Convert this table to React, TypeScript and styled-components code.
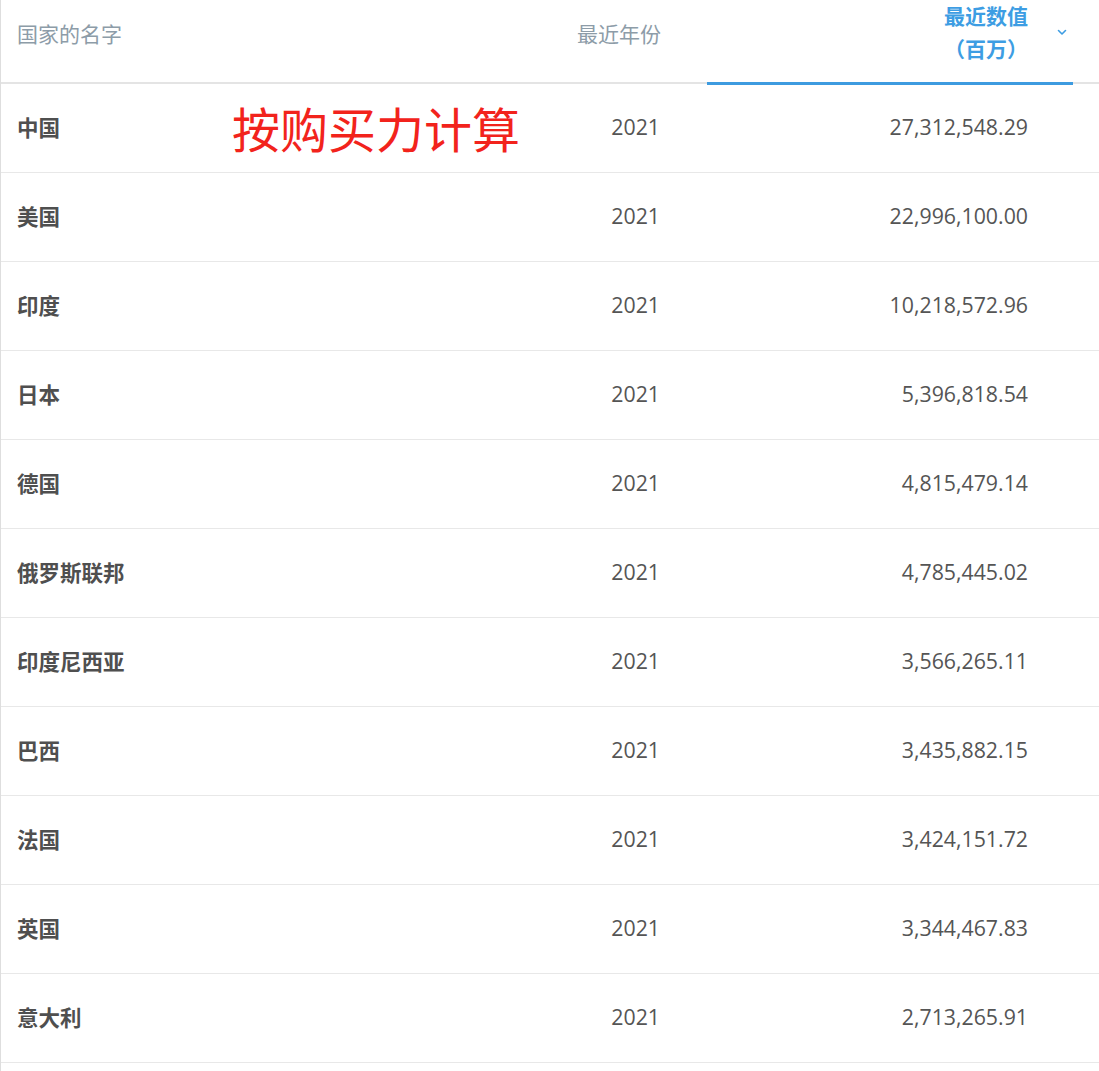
import React from 'react'
import styled, { createGlobalStyle } from 'styled-components'

const GlobalStyle = createGlobalStyle`
  html, body {
    margin: 0;
    padding: 0;
    background: #ffffff;
  }
  body {
    font-family: 'Open Sans', 'Noto Sans CJK SC', sans-serif;
  }
`

const COLUMNS = '479px 227px 366px 26px'

const Table = styled.div`
  width: 1099px;
  box-sizing: border-box;
  border-left: 1px solid #dedede;
  min-height: 1071px;
`

const HeaderRow = styled.div`
  display: grid;
  grid-template-columns: ${COLUMNS};
  height: 84px;
  box-sizing: border-box;
  border-bottom: 2px solid #e4e4e4;
`

const HeaderCell = styled.div<{ align?: 'left' | 'right' }>`
  display: flex;
  align-items: center;
  justify-content: ${({ align }) => (align === 'right' ? 'flex-end' : 'flex-start')};
  padding: ${({ align }) => (align === 'right' ? '0 46px 18px 0' : '0 0 18px 16px')};
  font-size: 21px;
  color: #8d9ca8;
`

const ActiveHeaderCell = styled.div`
  position: relative;
  display: flex;
  align-items: center;
  justify-content: flex-end;
  gap: 28px;
  padding: 0 5px 18px 0;

  &::after {
    content: '';
    position: absolute;
    left: 0;
    right: 0;
    bottom: -1px;
    height: 3px;
    background: #3d9be0;
  }
`

const ActiveLabel = styled.div`
  text-align: right;
  font-size: 21px;
  font-weight: 700;
  line-height: 33px;
  color: #3d9de3;
`

const Chevron = styled.svg`
  width: 12px;
  height: 12px;
  margin-bottom: 2px;
`

const Row = styled.div`
  position: relative;
  display: grid;
  grid-template-columns: ${COLUMNS};
  height: 89px;
  box-sizing: border-box;
  border-bottom: 1px solid #e8e8e8;
`

const NameCell = styled.div`
  display: flex;
  align-items: center;
  padding: 0 0 3px 16px;
  font-size: 21.5px;
  font-weight: 700;
  color: #4f4f4f;
`

const NumCell = styled.div<{ pad: number }>`
  display: flex;
  align-items: center;
  justify-content: flex-end;
  padding: 0 ${({ pad }) => pad}px 3px 0;
  font-size: 21.3px;
  color: #555555;
`

const Note = styled.div`
  position: absolute;
  left: 231px;
  top: 50%;
  transform: translateY(-52%);
  font-family: 'Noto Sans CJK SC', sans-serif;
  font-size: 48px;
  color: #f2231c;
`

const rows = [
  { name: '中国', year: 2021, value: '27,312,548.29' },
  { name: '美国', year: 2021, value: '22,996,100.00' },
  { name: '印度', year: 2021, value: '10,218,572.96' },
  { name: '日本', year: 2021, value: '5,396,818.54' },
  { name: '德国', year: 2021, value: '4,815,479.14' },
  { name: '俄罗斯联邦', year: 2021, value: '4,785,445.02' },
  { name: '印度尼西亚', year: 2021, value: '3,566,265.11' },
  { name: '巴西', year: 2021, value: '3,435,882.15' },
  { name: '法国', year: 2021, value: '3,424,151.72' },
  { name: '英国', year: 2021, value: '3,344,467.83' },
  { name: '意大利', year: 2021, value: '2,713,265.91' }
]

export default function App() {
  return (
    <>
      <GlobalStyle />
      <Table>
        <HeaderRow>
          <HeaderCell>国家的名字</HeaderCell>
          <HeaderCell align="right">最近年份</HeaderCell>
          <ActiveHeaderCell>
            <ActiveLabel>
              最近数值
              <br />
              （百万）
            </ActiveLabel>
            <Chevron viewBox="0 0 12 12">
              <path d="M2.5 4.5 L6 8 L9.5 4.5" fill="none" stroke="#3d9de3" strokeWidth="1.6" strokeLinecap="round" strokeLinejoin="round" />
            </Chevron>
          </ActiveHeaderCell>
          <div />
        </HeaderRow>
        {rows.map((r, i) => (
          <Row key={r.name}>
            <NameCell>{r.name}</NameCell>
            <NumCell pad={47}>{r.year}</NumCell>
            <NumCell pad={45}>{r.value}</NumCell>
            <div />
            {i === 0 && <Note>按购买力计算</Note>}
          </Row>
        ))}
      </Table>
    </>
  )
}
